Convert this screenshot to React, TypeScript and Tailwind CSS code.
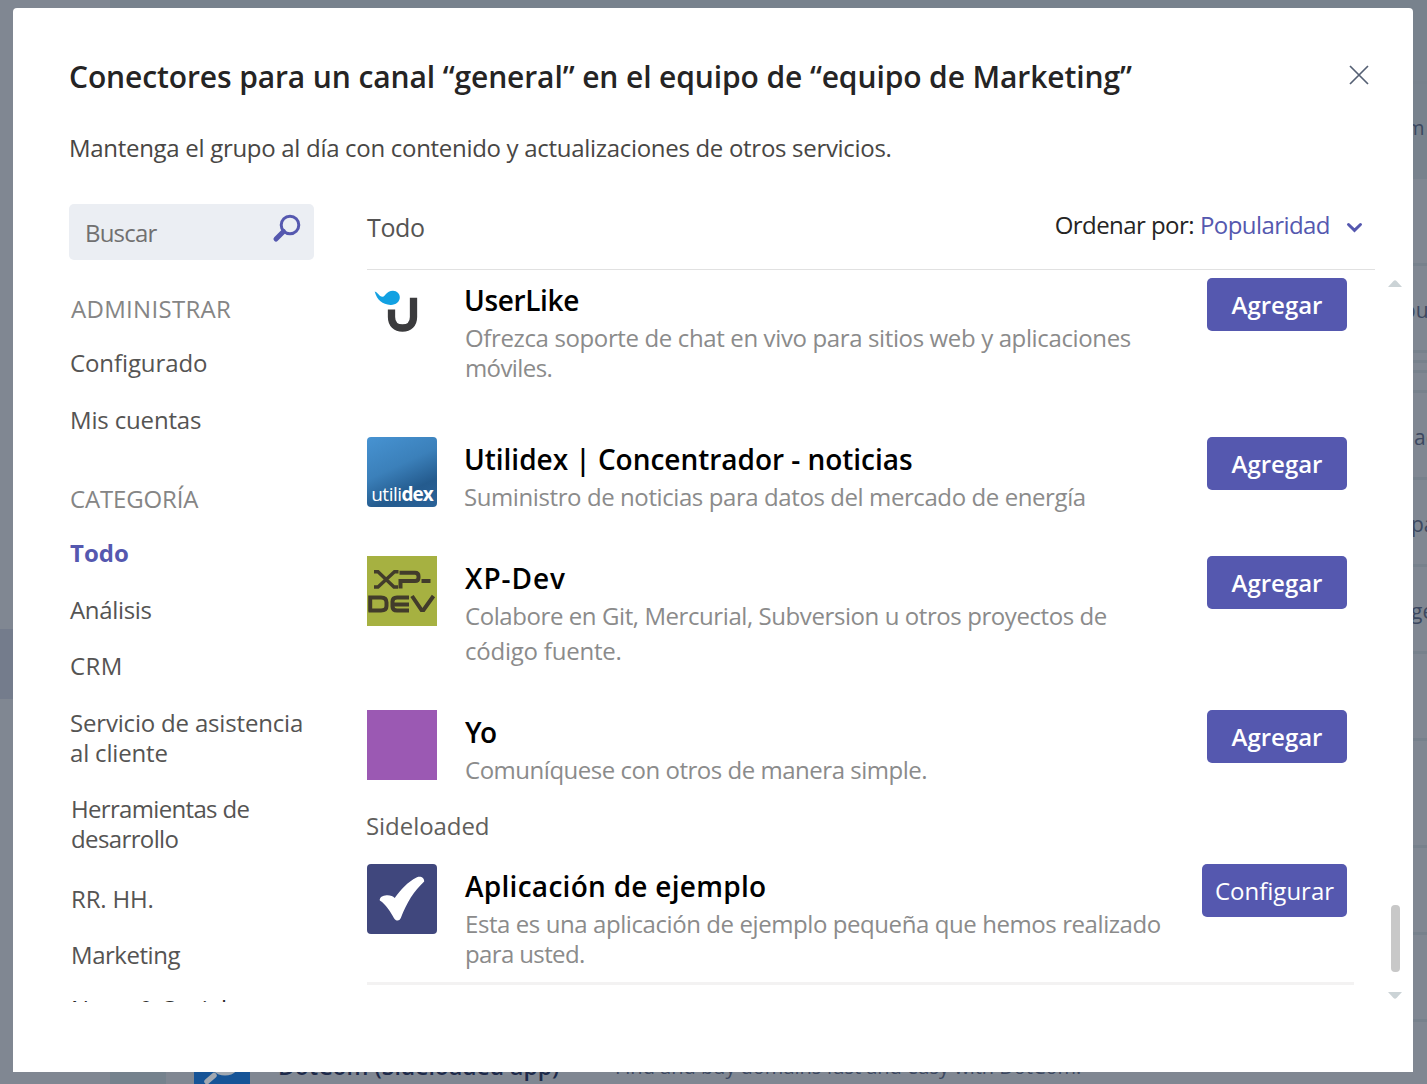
import React from "react";

type Line = { text: string; cls: string };

const backgroundRows: { cls: string; text?: string; textCls?: string }[] = [
  { cls: "h-[84px] border-b-[3px] bg-[#78828d]" },
  { cls: "h-[95px] bg-[#78828d] pb-2", text: "m", textCls: "pl-[6px] text-[20px]" },
  { cls: "h-[87px] border-b-[3px]" },
  { cls: "h-[87px] border-b-[3px] pt-[3px]", text: "ou", textCls: "pl-[3px] text-[21px]" },
  { cls: "h-[10px] border-b-[3px]" },
  { cls: "h-[10px] border-b-[3px]" },
  { cls: "h-[20px] border-b-[3px]" },
  { cls: "h-[87px] border-b-[3px] pt-[3px]", text: "ac", textCls: "pl-[14px] text-[21px]" },
  { cls: "h-[87px] border-b-[3px] pt-[3px]", text: "pa", textCls: "pl-[11px] text-[21px]" },
  { cls: "h-[87px] border-b-[3px] pt-[3px]", text: "ge", textCls: "pl-[11px] text-[21px]" },
  { cls: "h-[87px] border-b-[3px]" },
  { cls: "h-[107px] border-b-[3px]" },
  { cls: "h-[87px] border-b-[3px]" },
  { cls: "h-[87px] border-b-[3px]" },
];

const navItems: Line[] = [
  { text: "ADMINISTRAR", cls: "mt-[34px] text-[#858585] tracking-[0.3px] pl-px" },
  { text: "Configurado", cls: "mt-6 tracking-[-0.1px]" },
  { text: "Mis cuentas", cls: "mt-[27px] tracking-[-0.16px]" },
  { text: "CATEGORÍA", cls: "mt-[49px] text-[#858585] tracking-[-0.15px]" },
  { text: "Todo", cls: "mt-6 font-bold text-[#5558af]" },
  { text: "Análisis", cls: "mt-[27px] tracking-[-0.33px]" },
  { text: "CRM", cls: "mt-[26px] tracking-[0.4px]" },
  { text: "Servicio de asistencia", cls: "mt-[27px] tracking-[-0.18px]" },
  { text: "al cliente", cls: "tracking-[-0.17px]" },
  { text: "Herramientas de", cls: "mt-[26px] tracking-[-0.67px] pl-px" },
  { text: "desarrollo", cls: "tracking-[-0.62px] pl-px" },
  { text: "RR. HH.", cls: "mt-[30px] tracking-[-0.18px] pl-px" },
  { text: "Marketing", cls: "mt-[26px] tracking-[-0.46px] pl-px" },
  { text: "News & Social", cls: "mt-6 pl-px text-[#2a2a2a]" },
];

function UserLikeLogo() {
  return (
    <svg viewBox="0 0 70 70" className="size-[70px]">
      <path d="M7.700 13.500c3.300.7 4.500 5.500 8 5.200 2.800-.3 3.300-5.700 10.300-6 4 0 6.800 3 6.800 6.600 0 4.700-4.200 7.800-9.300 7.600C15.500 26.600 10 22 7.700 13.500z" fill="#12a1e2" />
      <path d="M24.500 31.500V39c0 7 4.300 11 11 11s11-4 11-11V19.700" fill="none" stroke="#3b3b3d" strokeWidth="7.300" />
    </svg>
  );
}

function UtilidexLogo() {
  return (
    <div className="flex size-[70px] items-end justify-center rounded bg-linear-[155deg,#4793d2_0%,#3b80ba_42%,#245b8e_72%,#2a6298_100%] font-['Open_Sans',sans-serif] text-[19px] leading-[25px] tracking-[-0.5px] text-white">
      <span>utili</span>
      <span className="font-bold tracking-[-1px]">dex</span>
    </div>
  );
}

function XpDevLogo() {
  return (
    <svg viewBox="0 0 70 70" className="size-[70px] bg-[#a6b141]" fill="none" stroke="#423c2b" strokeWidth="4">
      <path d="M7 15.700h4l16 15.300h4M31.500 15.700h-4L11 31H7" strokeWidth="3.400" />
      <path d="M33.500 32.500V25H48q3.500 0 3.500-3.200v-1.500q0-3.500-3.500-3.500H32.500M54.500 25h9" />
      <path d="M3.200 55.500V41.500H14q5.500 0 5.500 5V50q0 4.500-5.500 4.500H1.500M42 41.500H30q-4.500 0-4.500 4V50.500q0 4 4.500 4h12M25 48.500h17M45 40 54.500 54h2L66.500 40" />
    </svg>
  );
}

function CheckLogo() {
  return (
    <svg viewBox="0 0 70 70" className="size-[70px] rounded bg-[#40477d]">
      <path d="M12.800 36.500c-.6-3 3-5 6.700-5.200 4-.2 6.200.8 8.200 2.700C33.500 26 41 17.500 50 13.300c4-1.600 7.300.7 7.200 4.200C47 27 40 38 33.800 54c-1.400 3.300-4.800 3.300-6.800.2-4-7.200-8-13.700-14.200-17.700z" fill="#fff" />
    </svg>
  );
}

function ActionButton({ label, wide }: { label: string; wide?: boolean }) {
  return (
    <button
      className={
        wide
          ? "h-[53px] w-[145px] shrink-0 rounded-[5px] bg-[#5558af] text-[24px] leading-[53px] font-medium text-white"
          : "h-[53px] w-[140px] shrink-0 rounded-[5px] bg-[#5558af] text-[24px] leading-[53px] font-semibold text-white"
      }
    >
      {label}
    </button>
  );
}

function ConnectorRow({
  logo,
  title,
  lines,
  rowCls,
  descCls = "pt-[3px] leading-[30px]",
  action = "Agregar",
}: {
  logo: React.ReactNode;
  title: Line;
  lines: Line[];
  rowCls: string;
  descCls?: string;
  action?: string;
}) {
  return (
    <div className={"flex w-[980px] shrink-0 items-start " + rowCls}>
      <div className="w-[97px] shrink-0">{logo}</div>
      <div className="min-w-0 flex-1 pt-[2px] whitespace-nowrap">
        <h3 className={"text-[28px] leading-[40px] font-semibold text-black " + title.cls}>{title.text}</h3>
        <div className={"text-[24px] text-[#8b8b8b] " + descCls}>
          {lines.map((l) => (
            <p key={l.text} className={l.cls}>{l.text}</p>
          ))}
        </div>
      </div>
      <ActionButton label={action} wide={action !== "Agregar"} />
    </div>
  );
}

function Background() {
  return (
    <div className="absolute inset-0 flex">
      <div className="flex w-[110px] flex-col pt-[629px]">
        <div className="h-[70px] bg-[#747c8c]" />
      </div>
      <div className="flex flex-1 flex-col">
        {backgroundRows.map((r, i) => (
          <div key={i} className={"flex shrink-0 items-center justify-end border-[#77818c] " + r.cls}>
            {r.text && (
              <div className={"w-[27px] overflow-hidden leading-[30px] whitespace-nowrap text-[#3c4860] " + r.textCls}>
                {r.text}
              </div>
            )}
          </div>
        ))}
        <div className="flex h-[62px] shrink-0 items-end overflow-hidden whitespace-nowrap">
          <div className="h-[62px] w-14 bg-[#75828d]" />
          <div className="ml-7 flex h-14 w-14 bg-[#165497]">
            <svg viewBox="0 0 56 56" className="size-14" fill="none" stroke="#a1a8b1">
              <circle cx="31" cy="31" r="14" strokeWidth="5" />
              <path d="M20 47.500 13 53.500" strokeWidth="5.500" strokeLinecap="round" />
            </svg>
          </div>
          <div className="ml-[28px] h-[34px] w-[337px] text-[23px] leading-[32px] font-semibold text-[#1d2a4a]">
            DotCom (Sideloaded app)
          </div>
          <div className="h-[34px] text-[20px] leading-[34px] text-[#3c4860]">
            Find and buy domains fast and easy with DotCom.
          </div>
        </div>
      </div>
    </div>
  );
}

export default function App() {
  return (
    <div className="relative h-[1084px] w-[1427px] overflow-hidden bg-[#808792] font-['Open_Sans','Noto_Sans',sans-serif]">
      <Background />
      <div className="absolute top-2 left-[13px] flex h-[1064px] w-[1400px] flex-col rounded-t-[4px] bg-white pl-14">
        <header className="flex h-[196px] shrink-0 flex-col whitespace-nowrap">
          <div className="flex justify-between pt-[45px] pr-[43px]">
            <h1 className="text-[30px] leading-[48px] font-semibold tracking-[-0.11px] text-[#252424]">
              Conectores para un canal “general” en el equipo de “equipo de Marketing”
            </h1>
            <svg viewBox="0 0 22 22" className="mt-[11px] size-[22px]" fill="none" stroke="#556074" strokeWidth="1.700">
              <path d="M2 2l18 18M20 2l-18 18" />
            </svg>
          </div>
          <p className="mt-8 text-[24px] leading-[30px] tracking-[-0.3px] text-[#484644]">
            Mantenga el grupo al día con contenido y actualizaciones de otros servicios.
          </p>
        </header>

        <div className="flex">
          <aside className="flex h-[798px] w-[245px] shrink-0 flex-col overflow-hidden">
            <div className="flex h-14 shrink-0 items-start justify-between rounded-[5px] bg-[#ebeef3] pt-[9px] pr-3 pl-[16px]">
              <span className="pt-[5px] text-[24px] leading-[30px] tracking-[-0.8px] text-[#717070]">Buscar</span>
              <svg viewBox="0 0 30 30" className="size-[30px]" fill="none" stroke="#5558af">
                <circle cx="18" cy="12" r="8.800" strokeWidth="3" />
                <path d="M11.500 18.500 4 26" strokeWidth="5" strokeLinecap="round" />
              </svg>
            </div>
            <nav className="flex flex-col pl-px text-[24px] leading-[30px] whitespace-nowrap text-[#555453]">
              {navItems.map((n, i) => (
                <div key={i} className={n.cls}>{n.text}</div>
              ))}
            </nav>
          </aside>

          <main className="ml-[53px] flex h-[798px] w-[1008px] shrink-0 flex-col">
            <div className="flex h-[66px] shrink-0 items-start justify-between border-b border-[#e1e1e1] pt-1.5 pr-3">
              <h2 className="pt-[2px] text-[25px] leading-[30px] tracking-[-0.37px] text-[#555453]">Todo</h2>
              <div className="flex text-[24px] leading-[30px] tracking-[-0.56px] text-[#252424]">
                <span>Ordenar por:</span>
                <span className="ml-[6px] text-[#5558af]">Popularidad</span>
                <svg viewBox="0 0 18 14" className="mt-[10px] ml-[15px] h-[14px] w-[18px]" fill="none" stroke="#5558af" strokeWidth="3">
                  <path d="M3.500 4.500 9.500 10.300 15.500 4.500" strokeLinecap="round" />
                </svg>
              </div>
            </div>

            <div className="flex flex-col pt-2">
              <ConnectorRow
                rowCls="h-[159px]"
                logo={<UserLikeLogo />}
                title={{ text: "UserLike", cls: "tracking-[-0.35px]" }}
                lines={[
                  { text: "Ofrezca soporte de chat en vivo para sitios web y aplicaciones", cls: "pl-px tracking-[-0.37px]" },
                  { text: "móviles.", cls: "pl-px tracking-[-0.6px]" },
                ]}
              />
              <ConnectorRow
                rowCls="h-[119px]"
                logo={<UtilidexLogo />}
                title={{ text: "Utilidex | Concentrador - noticias", cls: "tracking-[-0.03px]" }}
                lines={[{ text: "Suministro de noticias para datos del mercado de energía", cls: "tracking-[-0.41px]" }]}
              />
              <ConnectorRow
                rowCls="h-[154px]"
                logo={<XpDevLogo />}
                title={{ text: "XP-Dev", cls: "pl-px tracking-[0.95px]" }}
                descCls="leading-[35px]"
                lines={[
                  { text: "Colabore en Git, Mercurial, Subversion u otros proyectos de", cls: "pl-px tracking-[-0.42px]" },
                  { text: "código fuente.", cls: "pl-px tracking-[-0.22px]" },
                ]}
              />
              <ConnectorRow
                rowCls="h-[101px]"
                logo={<div className="size-[70px] bg-[#9b59b3]" />}
                title={{ text: "Yo", cls: "pl-px tracking-[-1.5px]" }}
                lines={[{ text: "Comuníquese con otros de manera simple.", cls: "pl-px tracking-[-0.48px]" }]}
              />
              <h2 className="-ml-px h-[53px] text-[24px] leading-[30px] tracking-[-0.06px] text-[#605e5c]">Sideloaded</h2>
              <ConnectorRow
                rowCls="h-[118px]"
                logo={<CheckLogo />}
                title={{ text: "Aplicación de ejemplo", cls: "pl-px tracking-[0.28px]" }}
                action="Configurar"
                lines={[
                  { text: "Esta es una aplicación de ejemplo pequeña que hemos realizado", cls: "pl-px tracking-[-0.42px]" },
                  { text: "para usted.", cls: "pl-px tracking-[-0.63px]" },
                ]}
              />
              <div className="h-[3px] w-[987px] bg-[#f3f2f2]" />
            </div>
          </main>

          <div className="ml-[13px] flex h-[798px] w-[14px] flex-col items-center pt-[76px]">
            <svg viewBox="0 0 14 7" className="h-[7px] w-[14px] shrink-0" fill="#cbd3d6">
              <path d="M0 7 5.500 1Q7-.4 8.500 1L14 7z" />
            </svg>
            <div className="mt-[618px] h-[67px] w-[9px] shrink-0 rounded-[4px] bg-[#c8c8c8]" />
            <svg viewBox="0 0 14 7" className="mt-5 h-[7px] w-[14px] shrink-0" fill="#cbd3d6">
              <path d="M0 0 5.500 6Q7 7.400 8.500 6L14 0z" />
            </svg>
          </div>
        </div>
      </div>
    </div>
  );
}
